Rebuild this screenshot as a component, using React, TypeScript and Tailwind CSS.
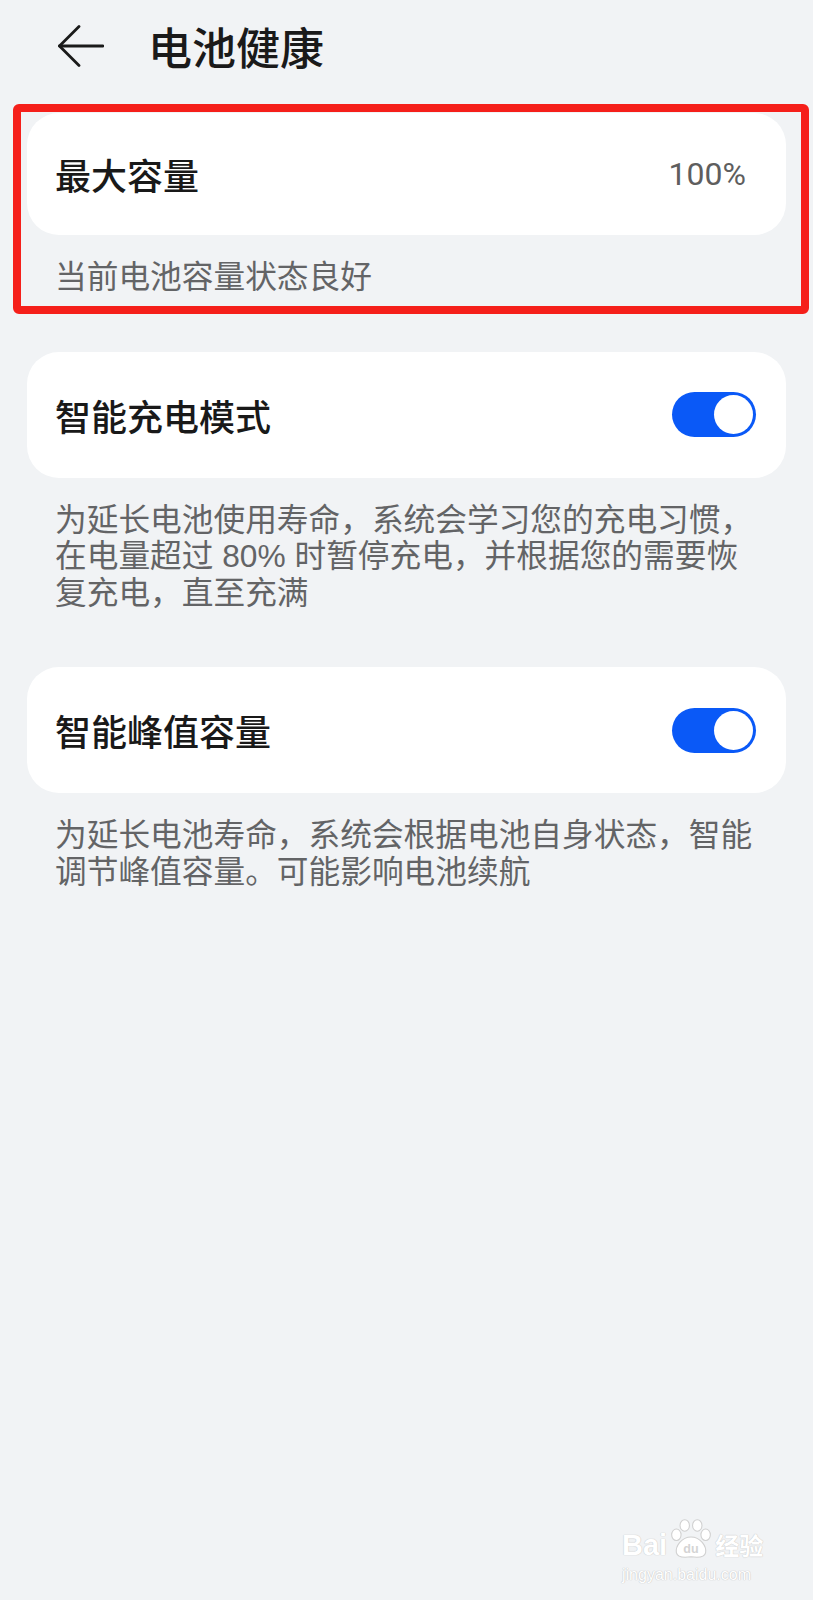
import React from "react";

function Toggle() {
  return (
    <div className="w-[84px] h-[45px] rounded-full bg-[#0a59f7] flex items-center justify-end pr-[3px] shrink-0">
      <div className="w-[39px] h-[39px] rounded-full bg-white" />
    </div>
  );
}

function BaiduMark() {
  return (
    <div className="absolute left-[622px] top-[1518px] flex flex-col items-start pointer-events-none select-none">
      <div className="flex items-end">
        <span className="text-[29px] leading-[30px] font-bold text-white [text-shadow:0_0_1px_#c8c8c8,0_0_1px_#c8c8c8] font-['Liberation_Sans',sans-serif]">
          Bai
        </span>
        <svg width="46" height="42" viewBox="0 0 44 40" className="mx-[1px]">
          <g fill="#ffffff" stroke="#cfcfcf" strokeWidth="1">
            <ellipse cx="8" cy="16" rx="4.5" ry="5.5" />
            <ellipse cx="16" cy="7" rx="4.5" ry="5.5" />
            <ellipse cx="28" cy="7" rx="4.5" ry="5.5" />
            <ellipse cx="36" cy="16" rx="4.5" ry="5.5" />
            <path d="M22 18 C13 18 7 27 8 33 C9 38 15 38 22 37 C29 38 35 38 36 33 C37 27 31 18 22 18 Z" />
          </g>
          <text x="22" y="33" textAnchor="middle" fontSize="12" fontWeight="bold" fill="#d4d4d4" fontFamily="Liberation Sans, sans-serif">
            du
          </text>
        </svg>
        <span className="text-[24px] leading-[30px] font-bold text-white [text-shadow:0_0_1px_#c8c8c8,0_0_1px_#c8c8c8] font-['Noto_Sans_CJK_SC',sans-serif]">
          经验
        </span>
      </div>
      <span className="mt-[6px] text-[16px] leading-[18px] text-white [text-shadow:0_0_1px_#c4c4c4,0_0_1px_#c4c4c4] font-['Liberation_Sans',sans-serif]">
        jingyan.baidu.com
      </span>
    </div>
  );
}

const descCls =
  "px-[28px] pt-[24px] text-[31.7px] leading-[36.5px] text-[#636466] whitespace-nowrap font-['Liberation_Sans','Noto_Sans_CJK_SC',sans-serif]";

export default function App() {
  return (
    <div className="relative w-full min-h-[1600px] bg-[#f1f3f5] font-['Roboto','Noto_Sans_CJK_SC',sans-serif] text-[#191919]">
      {/* Header */}
      <div className="h-[92px] flex items-center pl-[58px]">
        <svg width="46" height="42" viewBox="0 0 46 42" className="shrink-0">
          <path d="M1.5 21 H45" stroke="#1a1a1a" strokeWidth="2.8" strokeLinecap="round" fill="none" />
          <path d="M21 1.5 L1.5 21 L21 40.5" stroke="#1a1a1a" strokeWidth="2.8" strokeLinecap="round" strokeLinejoin="round" fill="none" />
        </svg>
        <h1 className="ml-[44px] text-[44px] leading-[52px] font-medium text-[#1a1a1a] font-['Noto_Sans_CJK_SC',sans-serif]">
          电池健康
        </h1>
      </div>

      <div className="mt-[21px] px-[27px] flex flex-col gap-[56px]">
        {/* Section 1 */}
        <div className="relative">
          <div className="h-[122px] rounded-[32px] bg-white px-[28px] flex items-center justify-between">
            <span className="text-[36px] leading-[44px] font-medium font-['Noto_Sans_CJK_SC',sans-serif]">最大容量</span>
            <span className="pr-[12px] text-[32px] leading-[40px] text-[#5e5e5e]">100%</span>
          </div>
          <div className={descCls}>当前电池容量状态良好</div>
          <div className="absolute top-[-9px] left-[-14px] right-[-23px] bottom-[-18px] border-[8px] border-[#f51f1a] rounded-[6px] pointer-events-none" />
        </div>

        {/* Section 2 */}
        <div>
          <div className="h-[126px] rounded-[32px] bg-white pl-[28px] pr-[30px] flex items-center justify-between">
            <span className="text-[36px] leading-[44px] font-medium font-['Noto_Sans_CJK_SC',sans-serif]">智能充电模式</span>
            <Toggle />
          </div>
          <div className={descCls}>
            <div>为延长电池使用寿命，系统会学习您的充电习惯，</div>
            <div>在电量超过 80% 时暂停充电，并根据您的需要恢</div>
            <div>复充电，直至充满</div>
          </div>
        </div>

        {/* Section 3 */}
        <div>
          <div className="h-[126px] rounded-[32px] bg-white pl-[28px] pr-[30px] flex items-center justify-between">
            <span className="text-[36px] leading-[44px] font-medium font-['Noto_Sans_CJK_SC',sans-serif]">智能峰值容量</span>
            <Toggle />
          </div>
          <div className={descCls}>
            <div>为延长电池寿命，系统会根据电池自身状态，智能</div>
            <div>调节峰值容量。可能影响电池续航</div>
          </div>
        </div>
      </div>

      <BaiduMark />
    </div>
  );
}
